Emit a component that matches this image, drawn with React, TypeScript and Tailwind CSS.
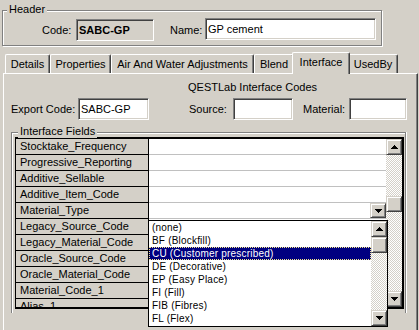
import React from "react";

const Tri = ({ down }: { down?: boolean }) => (
  <svg width="7" height="4" viewBox="0 0 7 4" shapeRendering="crispEdges">
    {down ? (
      <g fill="#000">
        <rect x="0" y="0" width="7" height="1" />
        <rect x="1" y="1" width="5" height="1" />
        <rect x="2" y="2" width="3" height="1" />
        <rect x="3" y="3" width="1" height="1" />
      </g>
    ) : (
      <g fill="#000">
        <rect x="3" y="0" width="1" height="1" />
        <rect x="2" y="1" width="3" height="1" />
        <rect x="1" y="2" width="5" height="1" />
        <rect x="0" y="3" width="7" height="1" />
      </g>
    )}
  </svg>
);

const Btn = ({ children, className }: { children?: React.ReactNode; className: string }) => (
  <div
    className={
      "flex items-center justify-center bg-[#d4d0c8] border border-t-[#d4d0c8] border-l-[#d4d0c8] border-r-[#404040] border-b-[#404040] shadow-[inset_1px_1px_0_#ffffff,inset_-1px_-1px_0_#808080] " +
      className
    }
  >
    {children}
  </div>
);

const Track = ({ className }: { className: string }) => (
  <div
    className={
      "bg-[image:repeating-conic-gradient(#ffffff_0%_25%,#d4d0c8_0%_50%)] bg-[length:2px_2px] " + className
    }
  />
);

const sunken =
  "border border-t-[#808080] border-l-[#808080] border-r-white border-b-white shadow-[inset_1px_1px_0_#404040,inset_-1px_-1px_0_#d4d0c8]";

const Tab = ({ label, w }: { label: string; w: string }) => (
  <div
    className={
      "h-[19px] flex items-center justify-center border-l border-t border-r border-l-white border-t-white border-r-[#404040] rounded-t-[2px] shadow-[inset_-1px_0_0_#808080] " +
      w
    }
  >
    {label}
  </div>
);

const fields = [
  "Stocktake_Frequency",
  "Progressive_Reporting",
  "Additive_Sellable",
  "Additive_Item_Code",
  "Material_Type",
  "Legacy_Source_Code",
  "Legacy_Material_Code",
  "Oracle_Source_Code",
  "Oracle_Material_Code",
  "Material_Code_1",
  "Alias_1",
];

const options = [
  "(none)",
  "BF (Blockfill)",
  "CU (Customer prescribed)",
  "DE (Decorative)",
  "EP (Easy Place)",
  "FI (Fill)",
  "FIB (Fibres)",
  "FL (Flex)",
];

export default function App() {
  return (
    <div className="relative w-[419px] h-[330px] overflow-hidden bg-[#d4d0c8] text-[11px] leading-[13px] text-black font-['Liberation_Sans',Arial,sans-serif]">
      {/* Header group */}
      <div className="relative ml-[2px] mt-[10px] w-[380px] h-[36px] border border-[#808080] shadow-[inset_1px_1px_0_#ffffff,1px_1px_0_#ffffff]">
        <span className="absolute left-[4px] top-[-8px] px-[2px] bg-[#d4d0c8] leading-[13px]">Header</span>
        <div className="flex items-center pt-[8px] pl-[39px]">
          <span className="w-[34px]">Code:</span>
          <div className={"w-[78px] h-[22px] flex items-center pl-[2px] bg-[#d4d0c8] font-bold " + sunken}>SABC-GP</div>
          <span className="ml-[16px] w-[35px]">Name:</span>
          <div className={"w-[171px] h-[22px] mt-[-2px] flex items-center pl-[2px] bg-white " + sunken}>GP cement</div>
        </div>
      </div>

      {/* Tabs */}
      <div className="flex items-end mt-[6px] h-[21px] pl-[5px]">
        <Tab label="Details" w="w-[45px]" />
        <Tab label="Properties" w="w-[61px]" />
        <Tab label="Air And Water Adjustments" w="w-[143px]" />
        <Tab label="Blend" w="w-[40px]" />
        <div className="relative z-10 ml-[-2px] mr-[-2px] mb-[-1px] w-[58px] h-[22px] pb-[3px] flex items-center justify-center bg-[#d4d0c8] border-l border-t border-r border-l-white border-t-white border-r-[#404040] rounded-t-[2px] shadow-[inset_-1px_0_0_#808080]">
          Interface
        </div>
        <Tab label="UsedBy" w="w-[50px]" />
      </div>

      {/* Panel */}
      <div className="ml-[3px] w-[415px] h-[257px] border-l border-t border-r border-l-white border-t-white border-r-[#404040] shadow-[inset_-1px_0_0_#808080]">
        <div className="mt-[7px] ml-[184px] leading-[13px]">QESTLab Interface Codes</div>
        <div className="flex items-center mt-[4px] h-[22px] pl-[7px]">
          <span className="w-[67px]">Export Code:</span>
          <div className={"w-[71px] h-[22px] flex items-center pl-[2px] bg-white " + sunken}>SABC-GP</div>
          <span className="ml-[40px] w-[44px]">Source:</span>
          <div className={"w-[60px] h-[22px] bg-white " + sunken} />
          <span className="ml-[10px] w-[46px]">Material:</span>
          <div className={"w-[58px] h-[22px] bg-white " + sunken} />
        </div>

        {/* Interface Fields group */}
        <div className="relative mt-[12px] ml-[7px] w-[395px] h-[181px] border border-b-0 border-[#808080] shadow-[inset_1px_1px_0_#ffffff,1px_0_0_#ffffff]">
          <span className="absolute left-[6px] top-[-8px] px-[2px] bg-[#d4d0c8] leading-[13px]">Interface Fields</span>
          <div className="mt-[4px] ml-[3px] w-[389px] h-[172px] flex border-l border-t-2 border-r-2 border-b-2 border-black bg-white">
            <div className="w-[370px] h-[168px] overflow-hidden flex flex-col">
              {fields.map((f, i) => (
                <div key={f} className="flex h-[16px] shrink-0">
                  <div className="w-[133px] h-[16px] pl-[4px] flex items-center bg-[#d4d0c8] border-r border-b border-black text-[11px]">
                    {f}
                  </div>
                  <div className="flex-1 h-[16px] bg-white border-b border-[#c0c0c0] flex justify-end">
                    {i === 4 && (
                      <Btn className="w-[16px] h-[15px]">
                        <Tri down />
                      </Btn>
                    )}
                  </div>
                </div>
              ))}
            </div>
            <div className="w-[16px] h-[168px] flex flex-col">
              <Btn className="w-[16px] h-[16px] shrink-0">
                <Tri />
              </Btn>
              <Track className="h-[41px] shrink-0" />
              <Btn className="w-[16px] h-[16px] shrink-0" />
              <Track className="flex-1" />
              <Btn className="w-[16px] h-[16px] shrink-0">
                <Tri down />
              </Btn>
            </div>
          </div>
        </div>
      </div>

      {/* Dropdown list overlay */}
      <div className="absolute left-[148px] top-[220px] w-[240px] h-[107px] border border-black bg-white flex z-20">
        <div className="w-[222px] flex flex-col text-[10px] tracking-[0.2px]">
          {options.map((o) => (
            <div
              key={o}
              className={
                o.startsWith("CU")
                  ? "h-[13px] shrink-0 flex items-center pl-[2px] bg-[#000080] text-white border border-dotted border-[#f5e88a]"
                  : "h-[13px] shrink-0 flex items-center pl-[3px]"
              }
            >
              {o}
            </div>
          ))}
        </div>
        <div className="w-[16px] flex flex-col">
          <Btn className="w-[16px] h-[16px] shrink-0">
            <Tri />
          </Btn>
          <Btn className="w-[16px] h-[16px] shrink-0" />
          <Track className="flex-1" />
          <Btn className="w-[16px] h-[16px] shrink-0">
            <Tri down />
          </Btn>
        </div>
      </div>
    </div>
  );
}
